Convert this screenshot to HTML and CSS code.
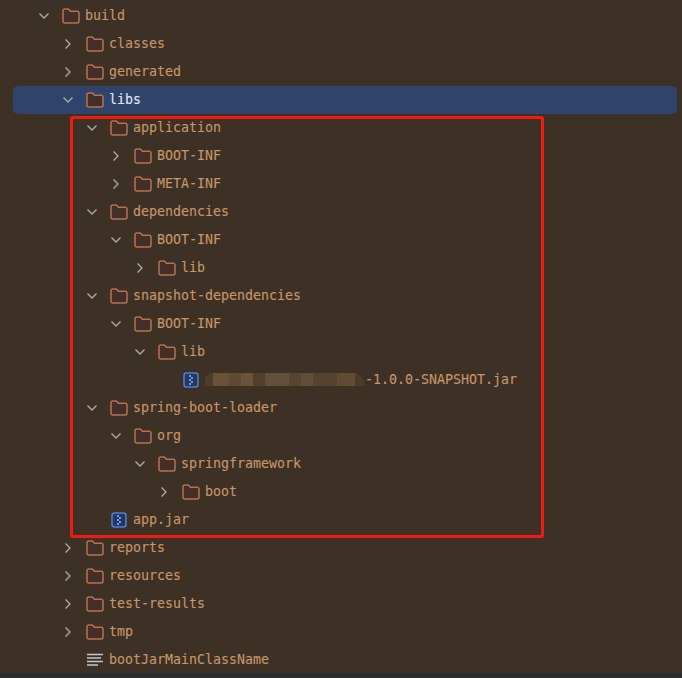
FILE: index.html
```html
<!DOCTYPE html>
<html lang="en">
<head>
<meta charset="utf-8">
<title>Project tree</title>
<link rel="stylesheet" href="styles.css">
</head>
<body>
<svg class="defs" width="0" height="0" aria-hidden="true">
  <symbol id="folder" viewBox="0 0 18 16">
    <path d="M1 3A2 2 0 0 1 3 1H6.300L8.600 3.300H15A2 2 0 0 1 17 5.300V13A2 2 0 0 1 15 15H3A2 2 0 0 1 1 13Z" fill="#432f27" stroke="#b5734f" stroke-width="1.500"/>
  </symbol>
  <symbol id="open" viewBox="0 0 12 12">
    <path d="M1.500 3.500L6 8L10.500 3.500" fill="none" stroke="#a8adb3" stroke-width="1.300"/>
  </symbol>
  <symbol id="closed" viewBox="0 0 12 12">
    <path d="M3.500 1.500L8 6L3.500 10.500" fill="none" stroke="#a8adb3" stroke-width="1.300"/>
  </symbol>
  <symbol id="jar" viewBox="0 0 16 16">
    <rect x="1" y="1" width="14" height="14" rx="2.500" fill="#26365c" stroke="#4f7fd8" stroke-width="1.500"/>
    <path d="M6 3H8V5H6ZM8 5H10V7H8ZM6 7H8V9H6ZM8 9H10V11H8ZM6 11H8V13H6Z" fill="#6a9bf0"/>
  </symbol>
</svg>
<main class="tree">
  <div class="row"><span class="ind d0"></span><svg class="chev"><use href="#open"/></svg><svg class="ico"><use href="#folder"/></svg><span class="name">build</span></div>
  <div class="row"><span class="ind d1"></span><svg class="chev"><use href="#closed"/></svg><svg class="ico"><use href="#folder"/></svg><span class="name">classes</span></div>
  <div class="row"><span class="ind d1"></span><svg class="chev"><use href="#closed"/></svg><svg class="ico"><use href="#folder"/></svg><span class="name">generated</span></div>
  <div class="row selected"><span class="ind d1"></span><svg class="chev"><use href="#open"/></svg><svg class="ico"><use href="#folder"/></svg><span class="name">libs</span></div>
  <div class="row"><span class="ind d2"></span><svg class="chev"><use href="#open"/></svg><svg class="ico"><use href="#folder"/></svg><span class="name">application</span></div>
  <div class="row"><span class="ind d3"></span><svg class="chev"><use href="#closed"/></svg><svg class="ico"><use href="#folder"/></svg><span class="name">BOOT-INF</span></div>
  <div class="row"><span class="ind d3"></span><svg class="chev"><use href="#closed"/></svg><svg class="ico"><use href="#folder"/></svg><span class="name">META-INF</span></div>
  <div class="row"><span class="ind d2"></span><svg class="chev"><use href="#open"/></svg><svg class="ico"><use href="#folder"/></svg><span class="name">dependencies</span></div>
  <div class="row"><span class="ind d3"></span><svg class="chev"><use href="#open"/></svg><svg class="ico"><use href="#folder"/></svg><span class="name">BOOT-INF</span></div>
  <div class="row"><span class="ind d4"></span><svg class="chev"><use href="#closed"/></svg><svg class="ico"><use href="#folder"/></svg><span class="name">lib</span></div>
  <div class="row"><span class="ind d2"></span><svg class="chev"><use href="#open"/></svg><svg class="ico"><use href="#folder"/></svg><span class="name">snapshot-dependencies</span></div>
  <div class="row"><span class="ind d3"></span><svg class="chev"><use href="#open"/></svg><svg class="ico"><use href="#folder"/></svg><span class="name">BOOT-INF</span></div>
  <div class="row"><span class="ind d4"></span><svg class="chev"><use href="#open"/></svg><svg class="ico"><use href="#folder"/></svg><span class="name">lib</span></div>
  <div class="row"><span class="ind d5"></span><span class="chev"></span><svg class="ico"><use href="#jar"/></svg><span class="smudge"></span><span class="name">-1.0.0-SNAPSHOT.jar</span></div>
  <div class="row"><span class="ind d2"></span><svg class="chev"><use href="#open"/></svg><svg class="ico"><use href="#folder"/></svg><span class="name">spring-boot-loader</span></div>
  <div class="row"><span class="ind d3"></span><svg class="chev"><use href="#open"/></svg><svg class="ico"><use href="#folder"/></svg><span class="name">org</span></div>
  <div class="row"><span class="ind d4"></span><svg class="chev"><use href="#open"/></svg><svg class="ico"><use href="#folder"/></svg><span class="name">springframework</span></div>
  <div class="row"><span class="ind d5"></span><svg class="chev"><use href="#closed"/></svg><svg class="ico"><use href="#folder"/></svg><span class="name">boot</span></div>
  <div class="row"><span class="ind d2"></span><span class="chev"></span><svg class="ico"><use href="#jar"/></svg><span class="name">app.jar</span></div>
  <div class="row"><span class="ind d1"></span><svg class="chev"><use href="#closed"/></svg><svg class="ico"><use href="#folder"/></svg><span class="name">reports</span></div>
  <div class="row"><span class="ind d1"></span><svg class="chev"><use href="#closed"/></svg><svg class="ico"><use href="#folder"/></svg><span class="name">resources</span></div>
  <div class="row"><span class="ind d1"></span><svg class="chev"><use href="#closed"/></svg><svg class="ico"><use href="#folder"/></svg><span class="name">test-results</span></div>
  <div class="row"><span class="ind d1"></span><svg class="chev"><use href="#closed"/></svg><svg class="ico"><use href="#folder"/></svg><span class="name">tmp</span></div>
  <div class="row"><span class="ind d1"></span><span class="chev"></span><svg class="ico" viewBox="0 0 18 16"><path d="M1 2.500H17M1 6H15M1 9.500H17M1 13H12" fill="none" stroke="#c4c6c9" stroke-width="1.300"/></svg><span class="name">bootJarMainClassName</span></div>
  <div class="highlight"></div>
</main>
</body>
</html>
```
FILE: styles.css
```css
* { box-sizing: border-box; }
html, body { margin: 0; padding: 0; }
body {
  width: 682px;
  height: 678px;
  overflow: hidden;
  background: #2b2d30;
}
.defs { position: absolute; }
.tree {
  position: relative;
  height: 673px;
  padding-top: 1px;
  background: #3d3125;
  border-top: 1px solid #35302b;
  font-family: "DejaVu Sans Mono", monospace;
  font-size: 13.29px;
  color: #c89669;
  -webkit-text-stroke: .1px;
}
.row {
  display: flex;
  align-items: center;
  height: 28px;
  margin: 0 5px 0 13px;
  border-radius: 5px;
}
.selected { background: #2f436b; color: #e3e8f0; }
.ind { flex: none; }
.d0 { width: 25px; }
.d1 { width: 49px; }
.d2 { width: 73px; }
.d3 { width: 97px; }
.d4 { width: 121px; }
.d5 { width: 145px; }
.chev { flex: none; width: 12px; height: 12px; margin-right: 12px; }
.ico { flex: none; width: 18px; height: 16px; margin-right: 5px; }
.name { white-space: pre; line-height: 27px; padding-bottom: 1px; }
.smudge {
  flex: none;
  width: 160px;
  height: 13px;
  margin-top: -1px;
  clip-path: polygon(0 4px, 5px 0, 152px 0, 160px 8px, 160px 13px, 0 13px);
  background: linear-gradient(90deg,
    #4d3d2c 0 8px, #6a5139 8px 24px, #5f4a35 24px 36px, #6b5239 36px 48px,
    #4f3f2e 48px 60px, #63503a 60px 84px, #574532 84px 96px, #624d37 96px 108px,
    #534330 108px 132px, #604b35 132px 150px, #4a3b2b 150px 160px);
}
.highlight {
  position: absolute;
  left: 70px;
  top: 115px;
  width: 474px;
  height: 422px;
  border: 3px solid #f01a12;
  border-radius: 3px;
  pointer-events: none;
}
```
